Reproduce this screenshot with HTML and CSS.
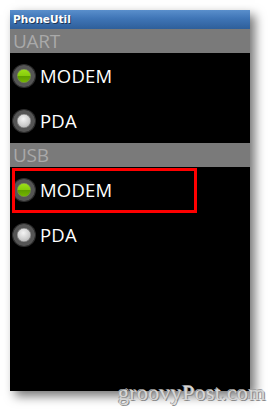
FILE: index.html
```html
<!DOCTYPE html>
<html>
<head>
<meta charset="utf-8">
<link rel="stylesheet" href="styles.css">
</head>
<body>
<div class="page">
  <div class="screen">
    <div class="titlebar">PhoneUtil</div>
    <div class="section">UART</div>
    <div class="row"><span class="radio on"></span><span class="label">MODEM</span></div>
    <div class="row"><span class="radio"></span><span class="label">PDA</span></div>
    <div class="section">USB</div>
    <div class="row"><span class="radio on"></span><span class="label">MODEM</span><div class="highlight"></div></div>
    <div class="row"><span class="radio"></span><span class="label">PDA</span></div>
  </div>
  <div class="watermark">groovyPost.com</div>
</div>
</body>
</html>
```
FILE: styles.css
```css
html, body {
  margin: 0;
  padding: 0;
  background: #ffffff;
}
.page {
  position: relative;
  width: 268px;
  height: 409px;
  padding: 10px 0 0 10px;
  box-sizing: border-box;
  overflow: hidden;
}
.screen {
  width: 240px;
  height: 381px;
  background: #000;
  box-shadow: 5px 5px 10px rgba(0,0,0,0.55);
  font-family: "Open Sans", "DejaVu Sans", sans-serif;
}
.titlebar {
  height: 19px;
  box-sizing: border-box;
  padding: 2px 0 0 3px;
  background: linear-gradient(#5a8fcc 0%, #3f75b6 45%, #2f5f9a 100%);
  color: #fff;
  font-family: "DejaVu Sans", sans-serif;
  font-weight: bold;
  font-size: 10.5px;
  line-height: 14px;
  text-shadow: 1px 1px 0 rgba(0,0,0,0.5);
}
.section {
  height: 24px;
  background: #7a7a7a;
  color: #a9a9a9;
  font-size: 19px;
  line-height: 24px;
  padding-left: 3px;
  letter-spacing: -0.3px;
}
.row {
  position: relative;
  height: 45px;
  display: flex;
  align-items: center;
  padding-left: 3px;
}
.radio {
  width: 14px;
  height: 14px;
  border-radius: 50%;
  border: 4px solid #555555;
  background: radial-gradient(circle at 45% 35%, #f4f4f4 0%, #d0d0d0 50%, #a0a0a0 100%);
  box-shadow: inset 0 0 0 0.5px #777, 0 0 0 1px #2e2e2e;
  flex: none;
}
.radio.on {
  background: linear-gradient(#9ee01a 0%, #86cc0a 50%, #5f9e00 52%, #76b800 100%);
}
.label {
  margin-left: 5px;
  color: #fff;
  font-size: 18.5px;
  letter-spacing: 0.2px;
}
.highlight {
  position: absolute;
  left: 2px;
  top: 1px;
  width: 185px;
  height: 45px;
  box-sizing: border-box;
  border: 3px solid #ff0000;
}
.watermark {
  position: absolute;
  left: 118px;
  top: 380px;
  font-family: "Liberation Serif", serif;
  font-size: 22px;
  color: #d6d6d6;
  text-shadow: -1px -1px 0 #a0a0a0, 1px 1px 0 #8a8a8a;
  letter-spacing: 0.3px;
}
```
